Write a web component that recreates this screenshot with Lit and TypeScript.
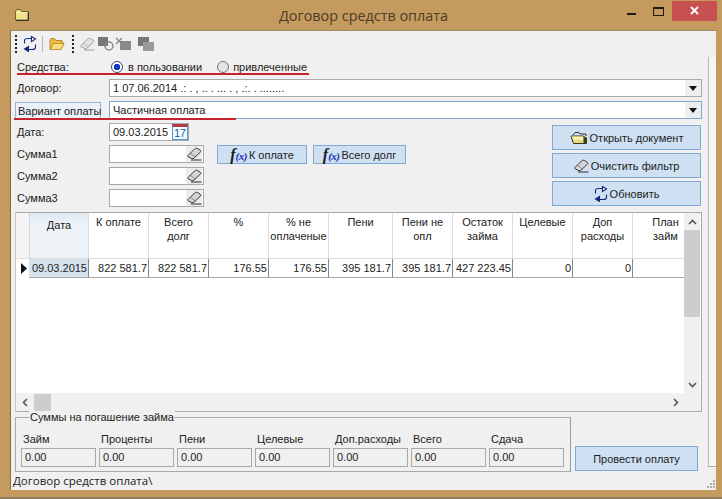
import { LitElement, html, css, svg } from "lit";
import { customElement } from "lit/decorators.js";

const winFolder = html`<svg width="14" height="12" viewBox="0 0 14 12">
  <path d="M0.5 2.5 L0.5 11 L13 11 L13 2.5 L6.5 2.5 L5 0.5 L1.5 0.5 Z" fill="#efe28a" stroke="#6e6430" stroke-width="1"/>
  <path d="M1 4 H12.5" stroke="#fbf4bf" stroke-width="1"/>
  <path d="M13.5 3 V11.5 H1" stroke="#333" stroke-width="1" fill="none"/>
</svg>`;

const toolFolder = html`<svg width="16" height="14" viewBox="0 0 16 14">
  <path d="M1 3 L1 12.5 L12 12.5 L15 6 L13 6 L13 3.5 L7 3.5 L5.5 1.5 L2 1.5 Z" fill="#e9b94c" stroke="#b98a22" stroke-width="1"/>
  <path d="M1.5 12.5 L4.5 6.5 L15 6.5 L12 12.5 Z" fill="#f8dd84" stroke="#c29528" stroke-width="1"/>
</svg>`;

const btnFolder = html`<svg width="18" height="14" viewBox="0 0 18 14">
  <path d="M3 4 L5 1.5 L9 1.5 L10 3 L16 3 L16 5" fill="none" stroke="#333" stroke-width="1"/>
  <path d="M1 5 L13 5 L16.5 7 L16.5 12.5 L3.5 12.5 Z" fill="#e6dc7c" stroke="#3a3620" stroke-width="1"/>
  <path d="M1.5 5.5 L13 5.5 L13.5 9 L3.5 9 Z" fill="#f6efb0"/>
  <path d="M13.5 6 V12.5 H16.5 V7 Z" fill="#3c3c24"/>
</svg>`;

const refresh = html`<svg width="14" height="16" viewBox="0 0 14 16" fill="none" stroke="#14287c" stroke-width="1.1">
  <path d="M1.5 7.5 V4.5 C1.5 2.8 3 2.5 5 2.5 H8"/>
  <path d="M8.5 0.5 L12.5 3 L8.5 5.5 Z" fill="#fff"/>
  <path d="M12.5 8.5 V11.5 C12.5 13.2 11 13.5 9 13.5 H6"/>
  <path d="M5.5 10.5 L1.5 13 L5.5 15.5 Z" fill="#14287c"/>
</svg>`;

const eraser = (dark = "#2a2a2a", fill = "#d4d4d4") => html`<svg width="15" height="14" viewBox="0 0 15 14">
  <path d="M1 8.5 L7.5 2 C8.5 1 9.5 1 10.5 1.5 L13 3 C14 3.8 14 4.6 13.2 5.4 L6.5 11.5 L4.5 11.5 L1.5 10 C0.8 9.6 0.6 9 1 8.5 Z" fill=${fill} stroke=${dark} stroke-width="0.9"/>
  <path d="M3.5 6.5 L8.5 10" stroke=${dark} stroke-width="0.7" fill="none" opacity="0.6"/>
  <path d="M4 13 H14.5" stroke=${dark} stroke-width="1"/>
</svg>`;

const fx = html`<span class="fx"><b>f</b><i>(x)</i></span>`;

type Cell = { t: unknown; cls?: string };
const heads: Cell[] = [
  { t: "", cls: "ind" },
  { t: "Дата", cls: "sel" },
  { t: "К оплате" },
  { t: html`Всего<br />долг` },
  { t: "%" },
  { t: html`% не<br />оплаченые` },
  { t: "Пени" },
  { t: html`Пени не<br />опл` },
  { t: html`Остаток<br />займа` },
  { t: "Целевые" },
  { t: html`Доп<br />расходы` },
  { t: html`План<br />займ`, cls: "plan" },
];
const row = ["09.03.2015", "822 581.7", "822 581.7", "176.55", "176.55", "395 181.7", "395 181.7", "427 223.45", "0", "0", ""];
const totals = ["Займ", "Проценты", "Пени", "Целевые", "Доп.расходы", "Всего", "Сдача"];

@customElement("app-root")
export class AppRoot extends LitElement {
  static styles = css`
    :host {
      display: block;
      width: 722px;
      height: 499px;
      position: relative;
      overflow: hidden;
      background: #c49a5f;
      font-family: "Liberation Sans", Arial, sans-serif;
      font-size: 11px;
      color: #222;
    }
    .frame { height: 497px; border-bottom: 2px solid #8f7f60; display: flex; flex-direction: column; }
    .title { height: 30px; display: flex; align-items: center; position: relative; padding-left: 15px; flex: none; }
    .title .name {
      position: absolute; left: 5px; right: 0; top: 6px; text-align: center;
      font-family: "Open Sans", sans-serif; font-size: 14.4px; line-height: 20px; color: #4b3d28;
    }
    .wicon { margin-top: 0; display: flex; }
    .controls { margin-left: auto; display: flex; align-self: flex-start; padding-top: 1px; margin-right: 5px; }
    .min { width: 9px; height: 2px; background: #1e1a14; margin: 12px 17px 0 0; }
    .max { width: 9px; height: 6px; border: 1px solid #1e1a14; border-top-width: 2px; margin: 6px 8px 0 0; }
    .close { width: 45px; height: 20px; background: #c75050; position: relative; }
    .close svg { position: absolute; left: 18px; top: 5px; }

    .client {
      width: 705px; height: 460px; margin-left: 11px; flex: none; background: #f0f0f0;
      border-top: 1px solid #9c8a68; box-shadow: -1px 0 0 #8a6c40;
      display: flex; flex-direction: column; box-sizing: border-box;
    }
    .toolbar { height: 25px; flex: none; display: flex; align-items: center; padding-left: 4px; background: #f0f0f0; }
    .toolbar > * { flex: none; }
    .grip { width: 2px; height: 18px; background: repeating-linear-gradient(#222 0 2px, transparent 2px 4px); }
    .g1 { margin-right: 6px; }
    .g2 { margin-left: 7px; margin-right: 6px; }
    .sep { width: 1px; height: 16px; background: #b8b8b8; margin: 0 6px 0 5px; }
    .gray { margin-left: 3px; }
    .mid { display: flex; height: 415px; flex: none; }
    .content { width: 697px; flex: none; padding-left: 4px; box-sizing: border-box; }
    .rail { width: 8px; flex: none; height: 410px; margin-top: 1px; background: #f6f6f6; border-left: 1px solid #b8b8b8; border-bottom: 1px solid #a8a8a8; box-sizing: border-box; }

    .line { display: flex; align-items: center; }
    .lab { width: 94px; flex: none; padding-left: 2px; box-sizing: border-box; }
    .radios { height: 23px; box-sizing: border-box; padding-bottom: 1px; }
    .radio { display: flex; align-items: center; gap: 5px; margin-left: 2px; margin-right: 15px; }
    .radio.two { margin-left: 0; margin-right: 0; gap: 4px; }
    .dot { width: 10px; height: 10px; border-radius: 50%; border: 1px solid #777; background: #e4e4e4; display: block; }
    .dot.on { background: radial-gradient(circle, #1038c8 0 3px, #fff 3.5px); border-color: #3a4a70; }
    .combo {
      height: 18px; flex: 1; box-sizing: border-box; background: #fff; border: 1px solid #a9a9a9;
      display: flex; align-items: center; padding-left: 3px; margin-right: 6px;
    }
    .combo.act { border-color: #7ba7d0; }
    .combo .arr { margin-left: auto; width: 16px; height: 16px; background: #eeeeee; display: flex; align-items: center; justify-content: center; }
    .tri { width: 0; height: 0; border: 4px solid transparent; border-top: 5px solid #111; border-bottom: 0; }
    .gap4 { margin-top: 4px; }
    .lab.boxed { width: 86px; height: 17px; border: 1px solid #93b5d8; background: #eaf1f8; margin-right: 8px; padding-left: 2px; display: flex; align-items: center; margin-top: 1px; white-space: nowrap; }

    .lower { display: flex; height: 84px; margin-top: 4px; margin-right: 7px; }
    .fields { display: flex; flex-direction: column; gap: 4px; }
    .fields .line { height: 18px; }
    .date, .sum { height: 18.5px; background: #fff; border: 1px solid #a9a9a9; box-sizing: border-box; display: flex; align-items: center; }
    .date { width: 80px; padding-left: 3px; justify-content: space-between; }
    .sum { width: 95px; justify-content: flex-end; padding-right: 1px; }
    .sum .er { background: #ececec; height: 16px; width: 16px; display: flex; align-items: center; justify-content: center; }
    .cal { width: 16px; height: 16px; display: block; background: #f4f9fd; border: 1px solid #4a9ad0; border-top: 3px solid #b33a44; box-sizing: border-box; font-size: 10.5px; line-height: 12px; text-align: center; color: #15589e; font-weight: 400; overflow: hidden; }
    .btn {
      background: #cee0f2; border: 1px solid #7fa9d6; box-sizing: border-box; color: #222;
      display: flex; align-items: center; justify-content: center; gap: 2px; white-space: nowrap;
    }
    .fxbtns { display: flex; gap: 6px; margin-left: 13px; margin-top: 22px; align-self: flex-start; }
    .fxbtns .btn { height: 19px; }
    .fxbtns .b1 { width: 90px; }
    .fxbtns .b2 { width: 93px; }
    .fx { font-family: "Liberation Serif", serif; display: inline-flex; align-items: baseline; color: #1a1a1a; }
    .fx b { font-size: 16px; font-style: italic; }
    .fx i { font-size: 11px; font-weight: 700; color: #1c2fb0; letter-spacing: -0.5px; }
    .side { margin-left: auto; width: 149px; display: flex; flex-direction: column; gap: 3px; margin-top: 2px; }
    .side .btn { height: 25px; gap: 2px; }

    .grid {
      margin-top: 5px; height: 200px; width: 687px; box-sizing: border-box; background: #fff;
      border: 1px solid #a9a9a9; border-left: 1px solid #c8c8c8; display: flex; flex-direction: column;
    }
    .gtop { display: flex; height: 180px; flex: none; }
    .tbl { width: 668px; flex: none; }
    .tr { display: grid; grid-template-columns: 13px 60px 60px 60px 60px 60px 64px 60px 60px 60px 60px 51px; }
    .th {
      height: 46px; box-sizing: border-box; background: #fff; border-right: 1px solid #dcdcdc; border-bottom: 1px solid #dcdcdc;
      text-align: center; padding-top: 2px; line-height: 14px; white-space: nowrap; overflow: hidden;
    }
    .th.ind { background: #f4f4f4; border-right: 0; }
    .th.sel { background: linear-gradient(#dfe9f2, #eef3f8 30%, #eef3f8); padding-top: 5px; border-right: 1px solid #dcdcdc; border-left: 1px solid #c9d8e6; }
    .th.plan { padding-left: 14px; border-right: 0; }
    .td {
      height: 19px; box-sizing: border-box; text-align: right; padding-right: 1px; line-height: 18px;
      border-right: 1px solid #8a8a8a; border-bottom: 1px solid #a9a9a9; white-space: nowrap; overflow: hidden;
    }
    .td.ind { border-right: 0; border-bottom: 0; display: flex; align-items: center; padding-left: 5px; }
    .td.sel { background: #d6e2ee; }
    .td.last { border-right: 0; }
    .vs { width: 16px; flex: none; background: #f0f0f0; display: flex; flex-direction: column; align-items: center; }
    .vs .thumb { width: 100%; height: 87px; background: #cdcdcd; flex: none; }
    .arrow { height: 17px; flex: none; display: flex; align-items: center; justify-content: center; }
    .vs .down { margin-top: auto; }
    .hs { height: 18px; flex: none; background: #f0f0f0; display: flex; align-items: center; }
    .hs .arrow { width: 18px; }
    .hs .thumb { width: 17px; height: 17px; background: #cdcdcd; }
    .hs .right { margin-left: auto; margin-right: 16px; }

    .bottom { display: flex; margin-top: 5px; height: 55px; }
    .group {
      width: 556px; height: 55px; box-sizing: border-box; border: 1px solid #a9a9a9; border-right-color: #999; position: relative;
      padding: 14px 0 0 5px;
    }
    .legend { position: absolute; left: 13px; top: -7px; background: #f0f0f0; padding: 0 1px; line-height: 13px; }
    .cols { display: flex; gap: 3px; }
    .col { width: 75px; }
    .col .cap { height: 16px; line-height: 14px; padding-left: 2px; white-space: nowrap; }
    .col .val { height: 19px; box-sizing: border-box; border: 1px solid #a9a9a9; padding-left: 3px; line-height: 17px; background: #f0f0f0; }
    .go { width: 123px; height: 25px; margin: 29px 0 0 4px; }

    .status { height: 19px; flex: none; display: flex; align-items: center; padding-left: 2px; font-family: "Open Sans", sans-serif; font-size: 11.5px; background: #f0f0f0; justify-content: space-between; }
    .rz { margin-right: 1px; margin-top: 7px; }

    .red { position: absolute; background: #c8202f; height: 2px; }
    .r1 { left: 17px; top: 73px; width: 292px; }
    .r2 { left: 14px; top: 118px; width: 222px; }
  `;

  render() {
    return html`
      <div class="frame">
        <div class="title">
          <span class="wicon">${winFolder}</span>
          <div class="name">Договор средств оплата</div>
          <div class="controls">
            <div class="min"></div>
            <div class="max"></div>
            <div class="close">
              <svg width="9" height="9" viewBox="0 0 9 9"><path d="M1 1 L8 8 M8 1 L1 8" stroke="#fff" stroke-width="1.8"/></svg>
            </div>
          </div>
        </div>
        <div class="client">
          <div class="toolbar">
            <span class="grip g1"></span>
            ${refresh}
            <span class="sep"></span>
            ${toolFolder}
            <span class="grip g2"></span>
            ${eraser("#9a9a9a", "#e2e2e2")}
            <svg class="gray" width="60" height="18" viewBox="0 0 60 18">
              <rect x="0" y="2" width="10" height="9" fill="#777"/>
              <circle cx="11" cy="11" r="4" fill="none" stroke="#888" stroke-width="1.5"/>
              <rect x="22" y="6" width="11" height="9" fill="#8a8a8a"/>
              <path d="M18 3 L24 9 M24 3 L18 9" stroke="#888" stroke-width="1.4"/>
              <rect x="40" y="2" width="11" height="9" fill="#777"/>
              <rect x="45" y="7" width="11" height="9" fill="#9a9a9a"/>
            </svg>
          </div>
          <div class="mid">
            <div class="content">
              <div class="line radios">
                <span class="lab">Средства:</span>
                <span class="radio"><span class="dot on"></span>в пользовании</span>
                <span class="radio two"><span class="dot"></span>привлеченные</span>
              </div>
              <div class="line">
                <span class="lab">Договор:</span>
                <div class="combo">1 07.06.2014 .: . , .. . ... . , .:. . ........<span class="arr"><span class="tri"></span></span></div>
              </div>
              <div class="line gap4">
                <span class="lab boxed">Вариант оплаты</span>
                <div class="combo act">Частичная оплата<span class="arr"><span class="tri"></span></span></div>
              </div>
              <div class="lower">
                <div class="fields">
                  <div class="line"><span class="lab">Дата:</span><div class="date">09.03.2015<span class="cal">17</span></div></div>
                  ${["Сумма1", "Сумма2", "Сумма3"].map(
                    (s) => html`<div class="line"><span class="lab">${s}</span><div class="sum"><span class="er">${eraser()}</span></div></div>`
                  )}
                </div>
                <div class="fxbtns">
                  <div class="btn b1">${fx}К оплате</div>
                  <div class="btn b2">${fx}Всего долг</div>
                </div>
                <div class="side">
                  <div class="btn">${btnFolder}Открыть документ</div>
                  <div class="btn">${eraser()}Очистить фильтр</div>
                  <div class="btn">${refresh}Обновить</div>
                </div>
              </div>
              <div class="grid">
                <div class="gtop">
                  <div class="tbl">
                    <div class="tr">
                      ${heads.map((h) => html`<div class="th ${h.cls ?? ""}">${h.t}</div>`)}
                    </div>
                    <div class="tr">
                      <div class="td ind">
                        <svg width="6" height="11" viewBox="0 0 6 11"><path d="M0 0 L6 5.5 L0 11 Z" fill="#111"/></svg>
                      </div>
                      ${row.map(
                        (v, i) => html`<div class="td ${i === 0 ? "sel" : ""} ${i === row.length - 1 ? "last" : ""}">${v}</div>`
                      )}
                    </div>
                  </div>
                  <div class="vs">
                    <div class="arrow"><svg width="9" height="6" viewBox="0 0 9 6"><path d="M1 5 L4.5 1.5 L8 5" fill="none" stroke="#555" stroke-width="1.6"/></svg></div>
                    <div class="thumb"></div>
                    <div class="arrow down"><svg width="9" height="6" viewBox="0 0 9 6"><path d="M1 1 L4.5 4.5 L8 1" fill="none" stroke="#555" stroke-width="1.6"/></svg></div>
                  </div>
                </div>
                <div class="hs">
                  <div class="arrow"><svg width="6" height="9" viewBox="0 0 6 9"><path d="M5 1 L1.5 4.5 L5 8" fill="none" stroke="#555" stroke-width="1.6"/></svg></div>
                  <div class="thumb"></div>
                  <div class="arrow right"><svg width="6" height="9" viewBox="0 0 6 9"><path d="M1 1 L4.5 4.5 L1 8" fill="none" stroke="#555" stroke-width="1.6"/></svg></div>
                </div>
              </div>
              <div class="bottom">
                <div class="group">
                  <div class="legend">Суммы на погашение займа</div>
                  <div class="cols">
                    ${totals.map((t) => html`<div class="col"><div class="cap">${t}</div><div class="val">0.00</div></div>`)}
                  </div>
                </div>
                <div class="btn go">Провести оплату</div>
              </div>
            </div>
            <div class="rail"></div>
          </div>
          <div class="status">
            <span>Договор средств оплата\\</span>
            <svg class="rz" width="8" height="8" viewBox="0 0 8 8" fill="#b0b0b0">
              ${[[6, 0], [3, 3], [6, 3], [0, 6], [3, 6], [6, 6]].map(([x, y]) => svg`<rect x=${x} y=${y} width="2" height="2"/>`)}
            </svg>
          </div>
        </div>
      </div>
      <div class="red r1"></div>
      <div class="red r2"></div>
    `;
  }
}
